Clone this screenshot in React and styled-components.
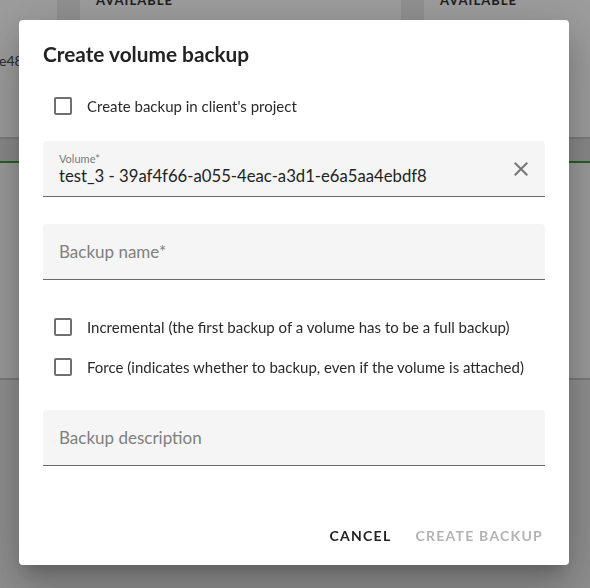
import React from "react";
import styled, { createGlobalStyle } from "styled-components";

const GlobalStyle = createGlobalStyle`
  html, body {
    margin: 0;
    padding: 0;
    height: 100%;
    overflow: hidden;
  }
  body {
    font-family: Lato, "Open Sans", sans-serif;
    background: #f4f4f4;
  }
`;

function CloseIcon() {
  return (
    <svg width="24" height="24" viewBox="0 0 24 24" fill="currentColor">
      <path d="M19 6.41 17.59 5 12 10.59 6.41 5 5 6.41 10.59 12 5 17.59 6.41 19 12 13.41 17.59 19 19 17.59 13.41 12z" />
    </svg>
  );
}

function Checkbox({ label }) {
  return (
    <CheckRow>
      <Box />
      <CheckLabel>{label}</CheckLabel>
    </CheckRow>
  );
}

function App() {
  return (
    <>
      <GlobalStyle />
      <Page>
        <CardRow>
          <Card $width="57px">
            <CardId>e48</CardId>
          </Card>
          <Card $width="321px">
            <Status>AVAILABLE</Status>
          </Card>
          <Card $width="200px">
            <Status>AVAILABLE</Status>
          </Card>
        </CardRow>
        <TabBar />
        <TableArea />
        <Footer />
      </Page>

      <Backdrop />

      <Dialog>
        <Title>Create volume backup</Title>
        <Body>
          <Checkbox label="Create backup in client's project" />

          <Field $top="20px">
            <FieldLabel>Volume*</FieldLabel>
            <FieldValue>test_3 - 39af4f66-a055-4eac-a3d1-e6a5aa4ebdf8</FieldValue>
            <ClearButton>
              <CloseIcon />
            </ClearButton>
          </Field>

          <Field $top="27px">
            <Placeholder>Backup name*</Placeholder>
          </Field>

          <CheckGroup>
            <Checkbox label="Incremental (the first backup of a volume has to be a full backup)" />
            <Checkbox label="Force (indicates whether to backup, even if the volume is attached)" />
          </CheckGroup>

          <Field $top="28px">
            <Placeholder>Backup description</Placeholder>
          </Field>
        </Body>
        <Actions>
          <ActionButton>Cancel</ActionButton>
          <ActionButton $disabled>Create backup</ActionButton>
        </Actions>
      </Dialog>
    </>
  );
}

export default App;

const Page = styled.div`
  display: flex;
  flex-direction: column;
  height: 588px;
  background: #ececec;
`;

const CardRow = styled.div`
  display: flex;
  gap: 23px;
  height: 137px;
  border-bottom: 2px solid #c8c8c8;
  background: #e8e8e8;
`;

const Card = styled.div`
  flex: 0 0 ${(p) => p.$width};
  background: #fcfcfc;
`;

const CardId = styled.span`
  display: block;
  padding-top: 52px;
  margin-left: -1px;
  font-size: 14px;
  color: #444;
`;

const Status = styled.span`
  display: block;
  margin-top: -8px;
  padding-left: 16px;
  font-size: 13px;
  font-weight: 700;
  letter-spacing: 1px;
  color: #333;
`;

const TabBar = styled.div`
  height: 22px;
  background: #dcdcdc;
  border-bottom: 2px solid #3f9a3f;
`;

const TableArea = styled.div`
  height: 215px;
  background: #f8f8f8;
  border-bottom: 2px solid #c4c4c4;
`;

const Footer = styled.div`
  flex: 1;
  background: #e6e6e6;
`;

const Backdrop = styled.div`
  position: fixed;
  inset: 0;
  background: rgba(0, 0, 0, 0.38);
`;

const Dialog = styled.div`
  position: fixed;
  left: 19px;
  top: 20px;
  width: 550px;
  height: 545px;
  background: #fff;
  border-radius: 4px;
  box-shadow: 0 11px 15px -7px rgba(0, 0, 0, 0.2),
    0 24px 38px 3px rgba(0, 0, 0, 0.14), 0 9px 46px 8px rgba(0, 0, 0, 0.12);
  display: flex;
  flex-direction: column;
`;

const Title = styled.h2`
  margin: 0;
  padding: 21px 24px 0;
  font-size: 20.8px;
  font-weight: 700;
  color: #222;
  line-height: 26px;
`;

const Body = styled.div`
  flex: 1;
  padding: 24px 24px 0;
  display: flex;
  flex-direction: column;
`;

const CheckRow = styled.label`
  display: flex;
  align-items: center;
  height: 30px;
  padding-left: 11px;
`;

const Box = styled.span`
  width: 14px;
  height: 14px;
  border: 2px solid #6f6f6f;
  border-radius: 2px;
  flex: none;
`;

const CheckLabel = styled.span`
  margin-left: 15px;
  font-size: 15px;
  color: #2a2a2a;
`;

const CheckGroup = styled.div`
  display: flex;
  flex-direction: column;
  gap: 10px;
  margin-top: 32px;
`;

const Field = styled.div`
  position: relative;
  box-sizing: border-box;
  margin-top: ${(p) => p.$top};
  height: 56px;
  background: #f5f5f5;
  border-radius: 4px 4px 0 0;
  border-bottom: 1px solid #6a6a6a;
  padding: 0 16px;
  display: flex;
  flex-direction: column;
  justify-content: center;
`;

const FieldLabel = styled.span`
  font-size: 11px;
  color: #7a7a7a;
  line-height: 13px;
  margin-top: 2px;
`;

const FieldValue = styled.span`
  font-size: 16.7px;
  color: #222;
  line-height: 22px;
`;

const Placeholder = styled.span`
  font-size: 17px;
  color: #808080;
  line-height: 22px;
`;

const ClearButton = styled.span`
  position: absolute;
  right: 12px;
  top: 16px;
  color: #767676;
  display: flex;
`;

const Actions = styled.div`
  display: flex;
  justify-content: flex-end;
  gap: 8px;
  padding: 0 18px 15px;
`;

const ActionButton = styled.button`
  border: none;
  background: none;
  font-family: inherit;
  font-size: 14px;
  font-weight: 700;
  letter-spacing: 1.25px;
  text-transform: uppercase;
  padding: 6px 8px;
  color: ${(p) => (p.$disabled ? "#b3b3b3" : "#222")};
`;
